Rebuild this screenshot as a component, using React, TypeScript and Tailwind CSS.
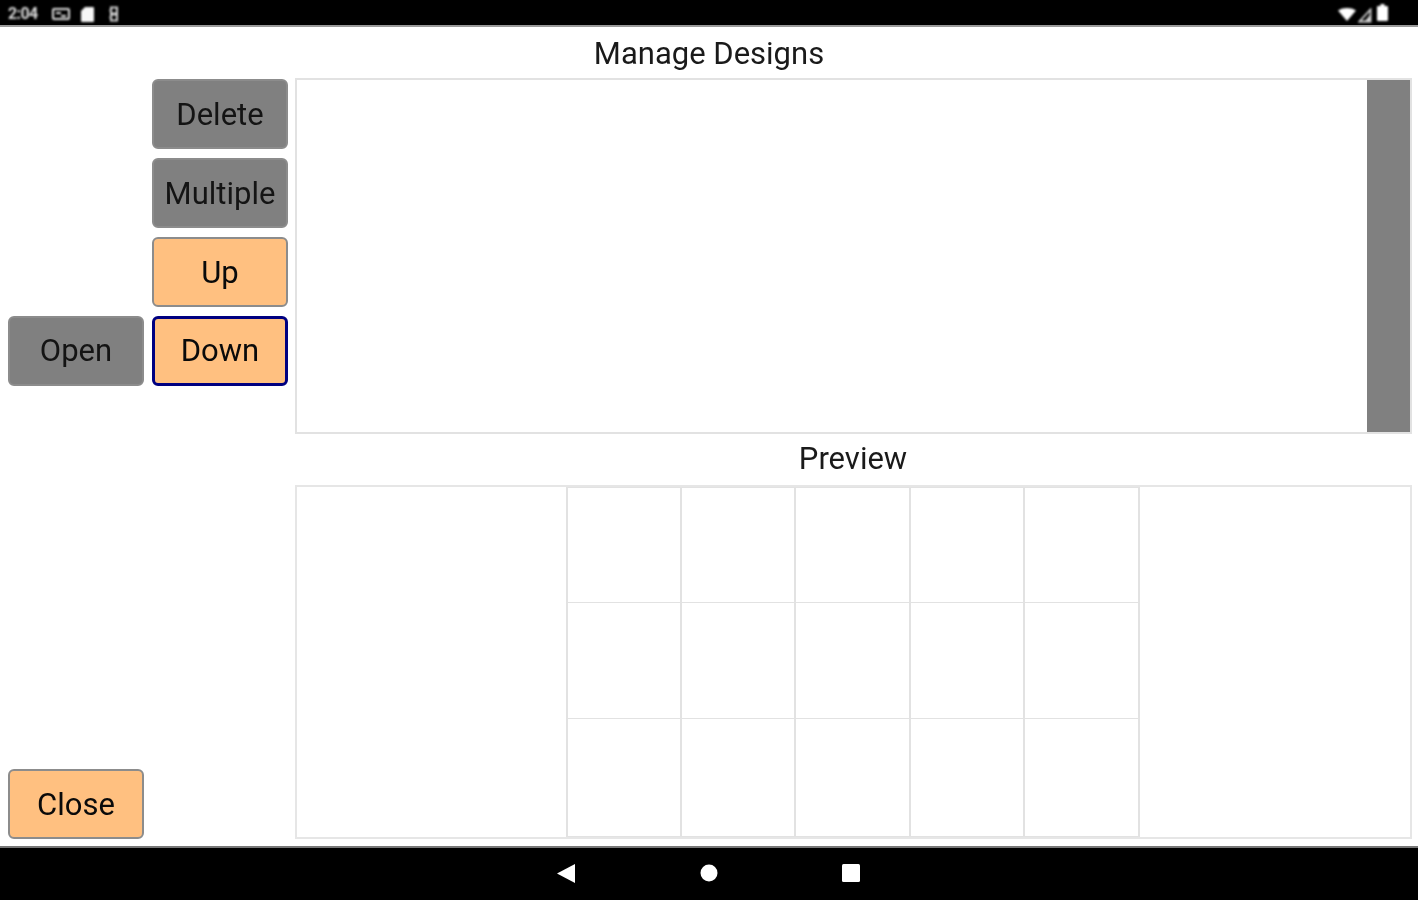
const font = { fontFamily: 'Roboto, "Liberation Sans", sans-serif' };

function Btn({ label, kind, focused, raised }: { label: string; kind: "gray" | "orange"; focused?: boolean; raised?: boolean }) {
  const color = kind === "gray" ? "bg-[#808080] text-[#141414]" : "bg-[#ffc080] text-[#0a0a0a]";
  const border = focused ? "border-[3px] border-[#000080]" : "border-2 border-[#8c8c8c]";
  const offset = raised ? "pb-[1px]" : "pb-0";
  return (
    <button className={`w-[136px] h-[70px] shrink-0 rounded-[6px] flex items-center justify-center text-[31px] leading-none ${offset} ${color} ${border}`}>
      {label}
    </button>
  );
}

function StatusBar() {
  return (
    <div className="h-[27px] shrink-0 bg-black border-b-2 border-[#9a9a9a] flex items-center justify-between pl-[8px] pr-[30px] pt-[3px]">
      <div className="flex items-center blur-[0.8px]">
        <span className="text-[16px] font-bold text-[#dddddd] w-[32px] tracking-[-0.6px]">2:04</span>
        <svg className="ml-[11px]" width="20" height="14" viewBox="0 0 20 14" fill="none">
          <path d="M3 2h14a1 1 0 0 1 1 1v8a1 1 0 0 1-1 1H3a1 1 0 0 1-1-1V3a1 1 0 0 1 1-1z" stroke="#ddd" strokeWidth="2" />
          <path d="M5 6h5M10 9h5" stroke="#ddd" strokeWidth="2.200" />
        </svg>
        <svg className="ml-[10px]" width="13" height="15" viewBox="0 0 13 15">
          <path d="M4 0h8a1 1 0 0 1 1 1v13a1 1 0 0 1-1 1H1a1 1 0 0 1-1-1V4z" fill="#f6f6f6" />
        </svg>
        <svg className="ml-[14px]" width="12" height="16" viewBox="0 0 12 16" fill="none">
          <path d="M3 1.500h6v6H3zM3 8.500h6v6H3z" stroke="#d4d4d4" strokeWidth="2" />
          <path d="M1 4.500h2M1 11.500h2" stroke="#aaaaaa" strokeWidth="1.500" />
        </svg>
      </div>
      <div className="flex items-center blur-[0.8px]">
        <svg width="18" height="13" viewBox="0 0 18 13">
          <path d="M0 2.500C5 -0.800 13 -0.800 18 2.500L9 13z" fill="#ffffff" />
        </svg>
        <svg className="ml-[2px] mt-[2px]" width="14" height="15" viewBox="0 0 14 15" fill="none">
          <path d="M12.500 1.500v12H1.500z" stroke="#d4d4d4" strokeWidth="1.800" />
          <path d="M12 7v6H7z" fill="#d4d4d4" />
        </svg>
        <svg className="ml-[5px] mb-[3px]" width="11" height="17" viewBox="0 0 11 17">
          <path d="M3.500 0h4v2H10a1 1 0 0 1 1 1v13a1 1 0 0 1-1 1H1a1 1 0 0 1-1-1V3a1 1 0 0 1 1-1h2.500z" fill="#ffffff" />
        </svg>
      </div>
    </div>
  );
}

function NavBar() {
  return (
    <div className="h-[54px] shrink-0 bg-black flex items-center justify-center border-t-2 border-[#777777] pr-[2px] pb-[2px]">
      <div className="flex items-center gap-[125px] blur-[0.7px]">
        <svg width="18" height="19" viewBox="0 0 18 19">
          <path d="M18 0v19L0 9.500z" fill="#ffffff" />
        </svg>
        <svg width="18" height="18" viewBox="0 0 18 18">
          <circle cx="9" cy="9" r="8.500" fill="#ffffff" />
        </svg>
        <svg className="-ml-[1px]" width="18" height="18" viewBox="0 0 18 18">
          <rect width="18" height="18" rx="1.500" fill="#ffffff" />
        </svg>
      </div>
    </div>
  );
}

export default function App() {
  const cells = Array.from({ length: 15 });
  return (
    <div className="w-[1418px] h-[900px] bg-white flex flex-col overflow-hidden text-black" style={font}>
      <StatusBar />
      <div className="h-[819px] shrink-0 flex flex-col">
        <div className="h-[51px] shrink-0 flex items-center justify-center text-[31px] leading-none text-[#1a1a1a] pt-[1px] blur-[0.7px]">
          Manage Designs
        </div>
        <div className="flex-1 flex pl-[8px] pr-[6px] pb-[7px] gap-[7px] min-h-0">
          <div className="w-[280px] shrink-0 flex flex-col justify-between pt-[1px] blur-[0.7px]">
            <div className="flex gap-[8px] items-end">
              <Btn label="Open" kind="gray" raised />
              <div className="flex flex-col gap-[9px]">
                <Btn label="Delete" kind="gray" />
                <Btn label="Multiple" kind="gray" />
                <Btn label="Up" kind="orange" />
                <Btn label="Down" kind="orange" focused raised />
              </div>
            </div>
            <Btn label="Close" kind="orange" />
          </div>
          <div className="flex-1 flex flex-col min-w-0">
            <div className="h-[356px] shrink-0 border-2 border-[#e2e2e2] flex justify-end blur-[0.5px]">
              <div className="w-[43px] bg-[#808080]" />
            </div>
            <div className="h-[51px] shrink-0 flex items-center justify-center text-[31px] leading-none text-[#1a1a1a] pb-[2px] pr-[1px] blur-[0.7px]">
              Preview
            </div>
            <div className="flex-1 border-2 border-[#e6e6e6] flex justify-center pr-[2px] blur-[0.5px]">
              <div className="w-[574px] grid grid-cols-5 grid-rows-[115px_116px_1fr] border-l-2 border-t border-[#e2e2e2]">
                {cells.map((_, i) => (
                  <div key={i} className="border-r-2 border-b border-[#e2e2e2]" />
                ))}
              </div>
            </div>
          </div>
        </div>
      </div>
      <NavBar />
    </div>
  );
}
